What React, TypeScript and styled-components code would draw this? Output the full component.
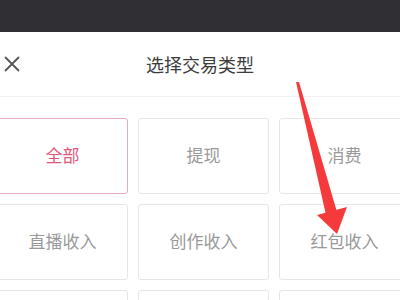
import React from 'react';
import styled, { createGlobalStyle } from 'styled-components';

const GlobalStyle = createGlobalStyle`
  html, body {
    margin: 0;
    padding: 0;
    background: #ffffff;
  }
  body {
    font-family: "Noto Sans CJK SC", "Noto Sans", sans-serif;
  }
`;

const Screen = styled.div`
  position: relative;
  width: 400px;
  height: 300px;
  overflow: hidden;
  background: #ffffff;
`;

const StatusBar = styled.div`
  height: 32px;
  background: #2f2f34;
`;

const Header = styled.div`
  position: relative;
  display: flex;
  align-items: center;
  justify-content: center;
  height: 64px;
  border-bottom: 1px solid #f1f1f1;
`;

const CloseButton = styled.button`
  position: absolute;
  left: 3px;
  top: 23px;
  width: 18px;
  height: 18px;
  padding: 0;
  border: none;
  background: none;
  display: flex;
  align-items: center;
  justify-content: center;
`;

const Title = styled.h1`
  margin: 0;
  font-size: 18px;
  font-weight: 400;
  color: #3c3c3c;
  line-height: 1;
  padding-bottom: 0;
`;

const Grid = styled.div`
  display: grid;
  grid-template-columns: repeat(3, 131px);
  grid-auto-rows: 76px;
  column-gap: 10px;
  row-gap: 10px;
  margin-left: -3px;
  padding-top: 21px;
`;

const Option = styled.div<{ $active?: boolean }>`
  display: flex;
  align-items: center;
  justify-content: center;
  border: 1px solid ${(p) => (p.$active ? '#e8a9b8' : '#e6e6e6')};
  border-radius: 3px;
  font-size: 17px;
  color: ${(p) => (p.$active ? '#e2577c' : '#999999')};
  box-sizing: border-box;
  padding-bottom: 3px;
`;

const Arrow = styled.svg`
  position: absolute;
  left: 0;
  top: 0;
  pointer-events: none;
`;

const options = ['全部', '提现', '消费', '直播收入', '创作收入', '红包收入', '', '', ''];

const App = (): JSX.Element => {
  return (
    <Screen>
      <GlobalStyle />
      <StatusBar />
      <Header>
        <CloseButton aria-label="关闭">
          <svg width="18" height="18" viewBox="0 0 18 18">
            <path d="M2.5 2.5 L15.5 15.5 M15.5 2.5 L2.5 15.5" stroke="#555" strokeWidth="1.8" strokeLinecap="round" />
          </svg>
        </CloseButton>
        <Title>选择交易类型</Title>
      </Header>
      <Grid>
        {options.map((label, i) => (
          <Option key={i} $active={i === 0}>
            {label}
          </Option>
        ))}
      </Grid>
      <Arrow width="400" height="300" viewBox="0 0 400 300">
        <polygon points="296,82 299,82 337,212 326,215" fill="#f53a3c" />
        <polygon points="317,215 347,207 337,234" fill="#f53a3c" />
      </Arrow>
    </Screen>
  );
};

export default App;
